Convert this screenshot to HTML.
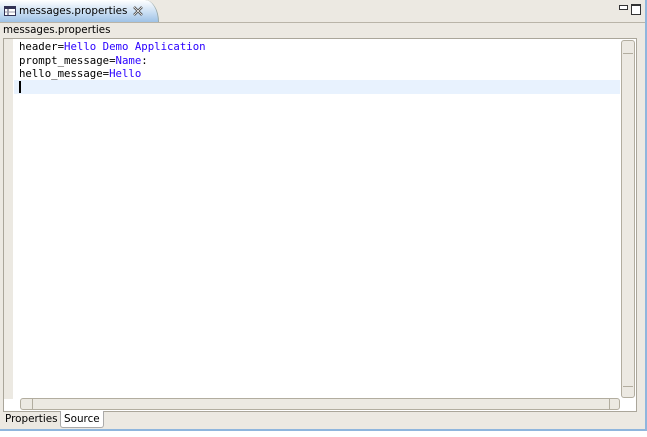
<!DOCTYPE html>
<html><head><style>
body{margin:0;width:647px;height:437px;background:#fff;position:relative;overflow:hidden;font-family:"DejaVu Sans","Liberation Sans",sans-serif;}
.frame{position:absolute;left:0;top:0;width:645px;height:429px;background:#ece9e2;border-right:2px solid #8fb6dd;border-bottom:2px solid #8fb6dd;}
.tabbar{position:absolute;left:0;top:0;width:645px;height:22px;background:#ece9e2;border-bottom:1px solid #b9b4a8;}
.tab{position:absolute;left:0;top:0;width:158px;height:22px;background:linear-gradient(#fff,#c6dcf2 60%,#9fc2e6);border-right:1px solid #9aa;border-top-right-radius:14px 22px;}
.tab span{position:absolute;left:19px;top:5px;font-size:10.4px;color:#000;}
.hdr{position:absolute;left:0;top:23px;width:645px;height:15px;font-size:10.3px;color:#000;padding-left:3px;line-height:15px;}
.ed{position:absolute;left:3px;top:38px;width:632px;height:372px;background:#fff;border:1px solid #aaa69a;}
.ruler{position:absolute;left:0;top:0;width:9px;height:360px;background:#ece9e2;}
.code{position:absolute;left:15px;top:1px;font-family:"DejaVu Sans Mono","Liberation Mono",monospace;font-size:10.7px;line-height:13.6px;white-space:pre;color:#000;}
.v{color:#2a00ff}
.cur{position:absolute;left:10px;top:41px;width:606px;height:14px;background:#e8f2fe;}
.caret{position:absolute;left:15px;top:42px;width:2px;height:12px;background:#000;}
.vs{position:absolute;left:617px;top:1px;width:12px;height:356px;background:#ece9e2;border:1px solid #b2ad9f;border-radius:3px;}
.hs{position:absolute;left:16px;top:359px;width:598px;height:10px;background:#ece9e2;border:1px solid #b2ad9f;border-radius:3px;}
.bt{position:absolute;top:411px;height:16px;font-size:10.4px;line-height:16px;padding:0 3px;}
</style></head><body>
<div class="frame"></div>
<div class="tabbar"><div class="tab">
<svg style="position:absolute;left:4px;top:6px" width="12" height="10"><rect x="0.5" y="0.5" width="11" height="9" fill="#fff" stroke="#335"/><rect x="1" y="1" width="10" height="2" fill="#335"/><line x1="4" y1="3" x2="4" y2="9" stroke="#335"/><line x1="1" y1="6" x2="11" y2="6" stroke="#99a"/></svg>
<span>messages.properties</span>
<svg style="position:absolute;left:133px;top:6px" width="10" height="10"><path d="M1 1L9 9M9 1L1 9" stroke="#444" stroke-width="2.4"/><path d="M1 1L9 9M9 1L1 9" stroke="#fff" stroke-width="0.8"/></svg></div>
<div style="position:absolute;left:619px;top:5px;width:7px;height:3px;border:1px solid #333;background:#fff"></div>
<div style="position:absolute;left:631px;top:4px;width:8px;height:8px;border:1px solid #333;border-top-width:2px;background:#fff"></div>
</div>
<div class="hdr">messages.properties</div>
<div class="ed">
<div class="ruler"></div>
<div class="cur"></div><div class="caret"></div>
<div class="code">header=<span class="v">Hello Demo Application</span>
prompt_message=<span class="v">Name</span>:
hello_message=<span class="v">Hello</span></div>
<div class="vs"><div style="position:absolute;left:1px;top:12px;width:10px;height:332px;border-top:1px solid #b2ad9f;border-bottom:1px solid #b2ad9f"></div></div>
<div class="hs"><div style="position:absolute;left:11px;top:0;width:576px;height:10px;border-left:1px solid #b2ad9f;border-right:1px solid #b2ad9f"></div></div>
</div>
<div class="bt" style="left:2px">Properties</div>
<div class="bt" style="left:60px;width:36px;background:#fff;border:1px solid #aaa;border-top:none;border-radius:0 0 3px 3px">Source</div>
</body></html>
